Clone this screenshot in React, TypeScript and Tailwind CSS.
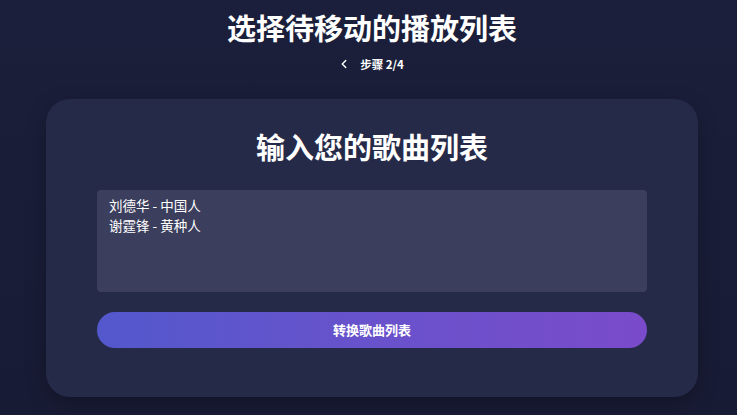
import { ChevronLeft } from "lucide-react";

const songs = "刘德华 - 中国人\n谢霆锋 - 黄种人";

export default function App() {
  return (
    <div
      className="min-h-[415px] w-full bg-gradient-to-b from-[#1b1f3b] to-[#181b34] text-white"
      style={{ fontFamily: '"Noto Sans CJK SC", "Noto Sans", sans-serif' }}
    >
      <div className="flex flex-col items-center pt-[6px]">
        <h1 className="text-[29px] font-bold leading-[42px] pl-[7px]">选择待移动的播放列表</h1>
        <div className="mt-[8px] flex items-center gap-[8px] pl-[4px] text-[11.5px] font-bold leading-[16px]">
          <ChevronLeft className="size-[14px]" strokeWidth={2.5} />
          <span className="ml-[1px]">步骤 2/4</span>
        </div>
      </div>

      <div className="ml-[46px] mt-[27px] w-[652px] rounded-[24px] bg-[#262a49] px-[51px] pt-[26px] pb-[49px] shadow-[0_6px_20px_rgba(0,0,0,0.25)]">
        <h2 className="text-center text-[29px] font-bold leading-[42px]">输入您的歌曲列表</h2>
        <textarea
          defaultValue={songs}
          className="mt-[23px] block h-[102px] w-full resize-none rounded-[4px] bg-[#3b3e5c] px-[12px] py-[5px] text-[13.5px] leading-[20px] text-white outline-none"
        />
        <button className="mt-[20px] h-[36px] w-full rounded-full bg-gradient-to-r from-[#5358cc] to-[#7a4bcb] text-[13px] font-bold text-white">
          转换歌曲列表
        </button>
      </div>
    </div>
  );
}
